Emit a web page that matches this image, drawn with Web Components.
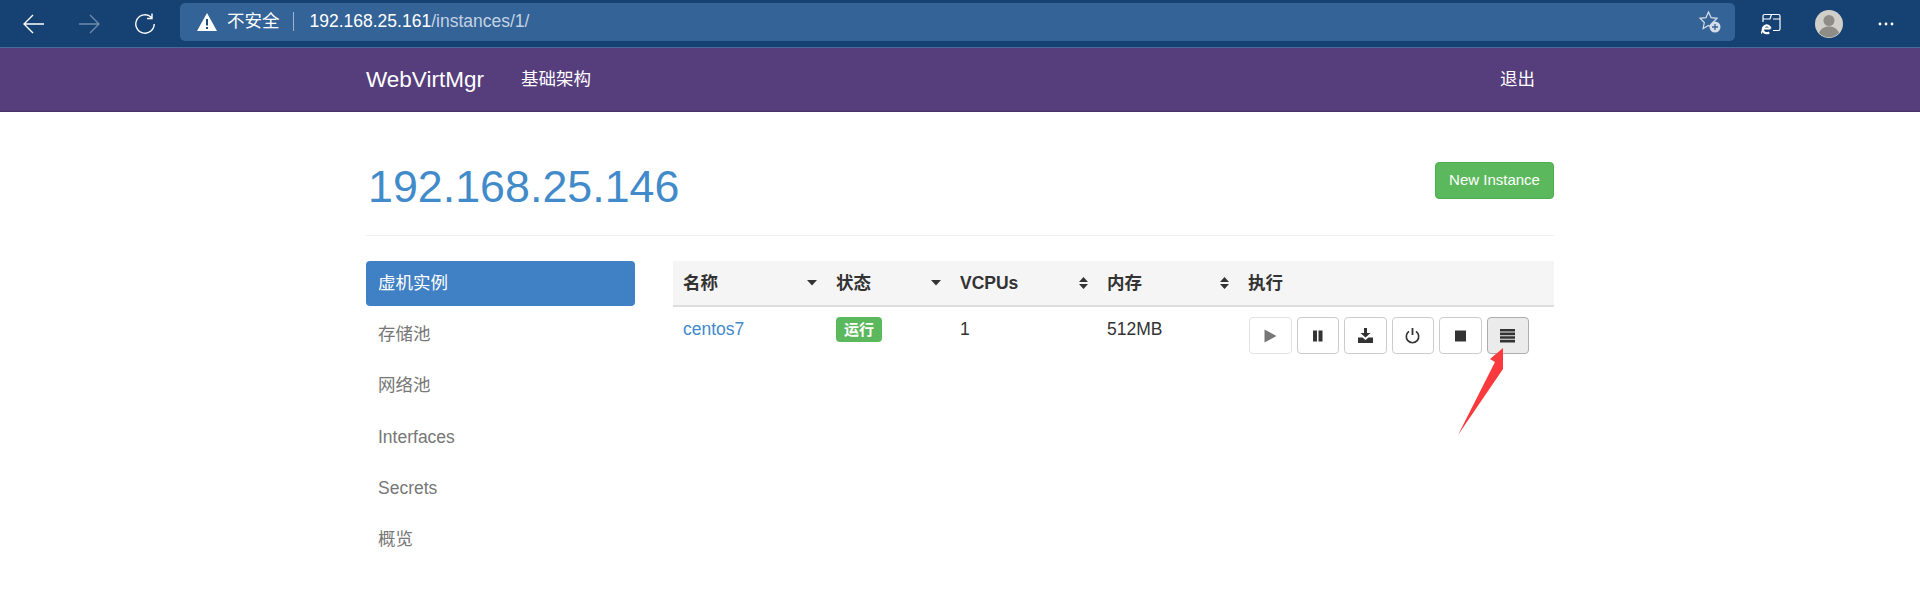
<!DOCTYPE html>
<html lang="zh">
<head>
<meta charset="utf-8">
<title>WebVirtMgr</title>
<style>
    html, body { margin: 0; padding: 0; background: #fff; }
    body { font: 17.5px/25px "Liberation Sans", "Noto Sans CJK SC", sans-serif; color: #333; overflow: hidden; }
</style>
</head>
<body>
<browser-bar></browser-bar>
<top-nav></top-nav>
<page-main>
    <page-header></page-header>
    <div slot="side">
        <nav-item active>虚机实例</nav-item>
        <nav-item>存储池</nav-item>
        <nav-item>网络池</nav-item>
        <nav-item>Interfaces</nav-item>
        <nav-item>Secrets</nav-item>
        <nav-item>概览</nav-item>
    </div>
    <instance-table slot="content"></instance-table>
</page-main>
<red-arrow></red-arrow>

<script>
const FONT = `"Liberation Sans", "Noto Sans CJK SC", sans-serif`;

class BrowserBar extends HTMLElement {
    connectedCallback() {
        this.attachShadow({ mode: "open" });
        this.render();
    }
    render() {
        this.shadowRoot.innerHTML = `
            <style>
                :host { display: flex; align-items: center; height: 47px; background: #164173; border-bottom: 1px solid #4a6a9a; font-family: ${FONT}; color: #fff; }
                .nav { display: flex; width: 180px; flex: none; padding-left: 23px; gap: 33px; box-sizing: border-box; }
                .nav svg:last-child { margin-left: 1px; }
                svg { display: block; flex: none; }
                .url { flex: none; width: 1555px; height: 38px; margin-top: -4px; background: #336397; border-radius: 5px; display: flex; align-items: center; box-sizing: border-box; padding-left: 17px; font-size: 17.5px; }
                .warn { margin-right: 10px; }
                .sep { width: 1px; height: 19px; background: #9db4cf; margin: 0 16px 0 13px; }
                .path { color: #c4d2e3; }
                .star { margin-left: auto; margin-right: 13px; }
                .tools { flex: 1; display: flex; align-items: center; padding-left: 25px; }
                .avatar { margin-left: 33px; }
                .dots { margin-left: 35px; }
            </style>
            <div class="nav">
                <svg width="22" height="22" viewBox="0 0 22 22" fill="none" stroke="#fff" stroke-width="1.4"><path d="M1 11h20M10 2l-9 9 9 9"/></svg>
                <svg width="22" height="22" viewBox="0 0 22 22" fill="none" stroke="#6f8bab" stroke-width="1.4"><path d="M1 11h20M12 2l9 9-9 9"/></svg>
                <svg width="22" height="22" viewBox="0 0 22 22" fill="none" stroke="#fff" stroke-width="1.4"><path d="M17.5 4.5A9.2 9.2 0 1 0 20.2 11M18 0.5v5h-5"/></svg>
            </div>
            <div class="url">
                <svg class="warn" width="20" height="18" viewBox="0 0 20 18"><path fill="#fff" d="M10 0l10 18H0z"/><path fill="#1c4a7c" d="M9 6h2v6.5H9zM9 14h2v2H9z"/></svg>
                <span>不安全</span>
                <span class="sep"></span>
                <span>192.168.25.161<span class="path">/instances/1/</span></span>
                <svg class="star" width="24" height="24" viewBox="0 0 24 24"><path fill="none" stroke="#d5dde8" stroke-width="1.2" d="M10.5 2l2.6 5.6 6 .7-4.4 4.2 1.2 6-5.4-3-5.4 3 1.2-6L2 8.3l6-.7z"/><circle cx="17" cy="17" r="5.5" fill="#d5dde8"/><path stroke="#336397" stroke-width="1.3" d="M17 14v6M14 17h6"/></svg>
            </div>
            <div class="tools">
                <svg width="22" height="22" viewBox="0 0 22 22" fill="none"><path stroke="#fff" stroke-width="1.2" d="M3 9V3a1.5 1.5 0 0 1 1.5-1.5h14A1.5 1.5 0 0 1 20 3v13a1.5 1.5 0 0 1-1.5 1.5H13M3 6h7l1.5-4.5M13 6h7"/><circle cx="7" cy="16" r="6" fill="#164173"/><path stroke="#fff" stroke-width="2.2" fill="none" d="M3 15.5h7.5M10.5 15.5a3.9 3.9 0 1 0-1.3 3.8"/><path stroke="#fff" stroke-width="1.4" fill="none" d="M2 20.5c-1-1 1-4 3-6"/></svg>
                <svg class="avatar" width="28" height="28" viewBox="0 0 28 28"><circle cx="14" cy="14" r="14" fill="#d1cfca"/><circle cx="14" cy="10.5" r="5.5" fill="#8f8c87"/><path fill="#8f8c87" d="M4 23c2-5 6-6.5 10-6.5s8 1.5 10 6.5a14 14 0 0 1-20 0z"/></svg>
                <svg class="dots" width="16" height="4" viewBox="0 0 16 4" fill="#fff"><circle cx="2" cy="2" r="1.4"/><circle cx="8" cy="2" r="1.4"/><circle cx="14" cy="2" r="1.4"/></svg>
            </div>
        `;
    }
}

class TopNav extends HTMLElement {
    connectedCallback() {
        this.attachShadow({ mode: "open" });
        this.shadowRoot.innerHTML = `
            <style>
                :host { display: block; height: 64px; background: #563d7c; border-bottom: 1px solid #463265; box-sizing: border-box; font-family: ${FONT}; color: #fff; }
                .inner { width: 1188px; height: 100%; margin: 0 auto; display: flex; align-items: center; }
                .brand { font-size: 22.5px; margin-right: 37px; }
                .link { font-size: 17.5px; }
                .out { margin-left: auto; margin-right: 19px; }
            </style>
            <div class="inner">
                <span class="brand">WebVirtMgr</span>
                <span class="link">基础架构</span>
                <span class="link out">退出</span>
            </div>
        `;
    }
}

class PageMain extends HTMLElement {
    connectedCallback() {
        this.attachShadow({ mode: "open" });
        this.shadowRoot.innerHTML = `
            <style>
                :host { display: block; width: 1188px; margin: 0 auto; }
                .cols { display: flex; gap: 38px; }
                .side { width: 269px; flex: none; }
                .content { flex: 1; min-width: 0; }
            </style>
            <slot></slot>
            <div class="cols">
                <div class="side"><slot name="side"></slot></div>
                <div class="content"><slot name="content"></slot></div>
            </div>
        `;
    }
}

class PageHeader extends HTMLElement {
    connectedCallback() {
        this.attachShadow({ mode: "open" });
        this.shadowRoot.innerHTML = `
            <style>
                :host { display: flex; align-items: flex-start; justify-content: space-between; height: 124px; padding-top: 50px; margin-bottom: 25px; box-sizing: border-box; border-bottom: 1px solid #eee; }
                h1 { margin: -1px 0 0 2px; font: 500 44.8px/50px ${FONT}; color: #428bca; }
                a { display: block; width: 119px; height: 37px; text-align: center; background: #5cb85c; border: 1px solid #4cae4c; border-radius: 4px; color: #fff; font-size: 15px; line-height: 33px; box-sizing: border-box; }
            </style>
            <h1>192.168.25.146</h1>
            <a>New Instance</a>
        `;
    }
}

class NavItem extends HTMLElement {
    connectedCallback() {
        this.attachShadow({ mode: "open" });
        this.shadowRoot.innerHTML = `
            <style>
                :host { display: block; height: 45px; margin-bottom: 6.2px; padding: 0 12px; line-height: 45px; border-radius: 4px; color: #777; font-size: 17.5px; box-sizing: border-box; }
                :host([active]) { background: #4080c4; color: #fff; }
            </style>
            <slot></slot>
        `;
    }
}

class StatusBadge extends HTMLElement {
    connectedCallback() {
        this.attachShadow({ mode: "open" });
        this.shadowRoot.innerHTML = `
            <style>
                :host { display: inline-block; background: #5cb85c; color: #fff; font-size: 15px; font-weight: 700; line-height: 25px; height: 25px; padding: 0 8px; border-radius: 4px; }
            </style>
            <slot></slot>
        `;
    }
}

class IconButton extends HTMLElement {
    connectedCallback() {
        this.attachShadow({ mode: "open" });
        this.shadowRoot.innerHTML = `
            <style>
                :host { display: flex; align-items: center; justify-content: center; width: 42.5px; height: 37px; box-sizing: border-box; background: #fff; border: 1px solid #ccc; border-radius: 4px; }
                :host([pressed]) { background: #ebebeb; border-color: #adadad; }
                :host([disabled]) { border-color: #e2e2e2; }
            </style>
            <slot></slot>
        `;
    }
}

const ICONS = {
    play: `<path fill="#777" d="M1.5 1.5l12 6.5-12 6.5z"/>`,
    pause: `<path fill="#333" d="M3 2.5h4v11H3zM8.5 2.5h4v11h-4z"/>`,
    save: `<path fill="#333" d="M6 0h3v5h3.5L7.5 9.5 2.5 5H6zM0 9.5h4.5l3 2.5 3-2.5H15V15H0z"/>`,
    power: `<path fill="none" stroke="#333" stroke-width="1.6" d="M4 3.4a6.2 6.2 0 1 0 7 0"/><path stroke="#333" stroke-width="1.8" d="M7.5 0v7"/>`,
    stop: `<path fill="#333" d="M2 2.5h11v11H2z"/>`,
    menu: `<path fill="#333" d="M0 1h15v2.6H0zM0 4.6h15v2.6H0zM0 8.2h15v2.6H0zM0 11.8h15v2.6H0z"/>`
};

class InstanceTable extends HTMLElement {
    connectedCallback() {
        this.attachShadow({ mode: "open" });
        const caret = `<svg width="10" height="6" viewBox="0 0 10 6"><path fill="#333" d="M0 0h10L5 5.5z"/></svg>`;
        const sort = `<svg width="9" height="12" viewBox="0 0 9 12"><path fill="#333" d="M4.5 0L9 5H0zM0 7h9l-4.5 5z"/></svg>`;
        const btn = (name, attr = "") =>
            `<icon-button ${attr}><svg width="15" height="16" viewBox="0 0 15 16">${ICONS[name]}</svg></icon-button>`;
        this.shadowRoot.innerHTML = `
            <style>
                :host { display: block; }
                .row { display: grid; grid-template-columns: 153px 124px 147px 141px 1fr; }
                .head { background: #f5f5f5; border-bottom: 2px solid #ddd; height: 46px; box-sizing: border-box; font-weight: 700; line-height: 44px; }
                .head > div { display: flex; align-items: center; justify-content: space-between; padding: 0 9px 0 10px; }
                .body > div { padding: 10px 10px 0; line-height: 25px; }
                a { color: #428bca; }
                .btns { display: flex; gap: 5px; padding-left: 11px !important; }
            </style>
            <div class="row head">
                <div>名称${caret}</div>
                <div>状态${caret}</div>
                <div>VCPUs${sort}</div>
                <div>内存${sort}</div>
                <div>执行</div>
            </div>
            <div class="row body">
                <div><a>centos7</a></div>
                <div><status-badge>运行</status-badge></div>
                <div>1</div>
                <div>512MB</div>
                <div class="btns">
                    ${btn("play", "disabled")}${btn("pause")}${btn("save")}${btn("power")}${btn("stop")}${btn("menu", "pressed")}
                </div>
            </div>
        `;
    }
}

class RedArrow extends HTMLElement {
    connectedCallback() {
        this.attachShadow({ mode: "open" });
        this.shadowRoot.innerHTML = `
            <style>
                :host { position: absolute; left: 1450px; top: 340px; width: 60px; height: 100px; pointer-events: none; }
                svg { display: block; }
            </style>
            <svg width="60" height="100" viewBox="0 0 60 100"><path fill="#fb3a3d" d="M53 8L40 19l5 3L8 95l45-66z"/></svg>
        `;
    }
}

customElements.define("browser-bar", BrowserBar);
customElements.define("top-nav", TopNav);
customElements.define("page-main", PageMain);
customElements.define("page-header", PageHeader);
customElements.define("nav-item", NavItem);
customElements.define("status-badge", StatusBadge);
customElements.define("icon-button", IconButton);
customElements.define("instance-table", InstanceTable);
customElements.define("red-arrow", RedArrow);
</script>
</body>
</html>
